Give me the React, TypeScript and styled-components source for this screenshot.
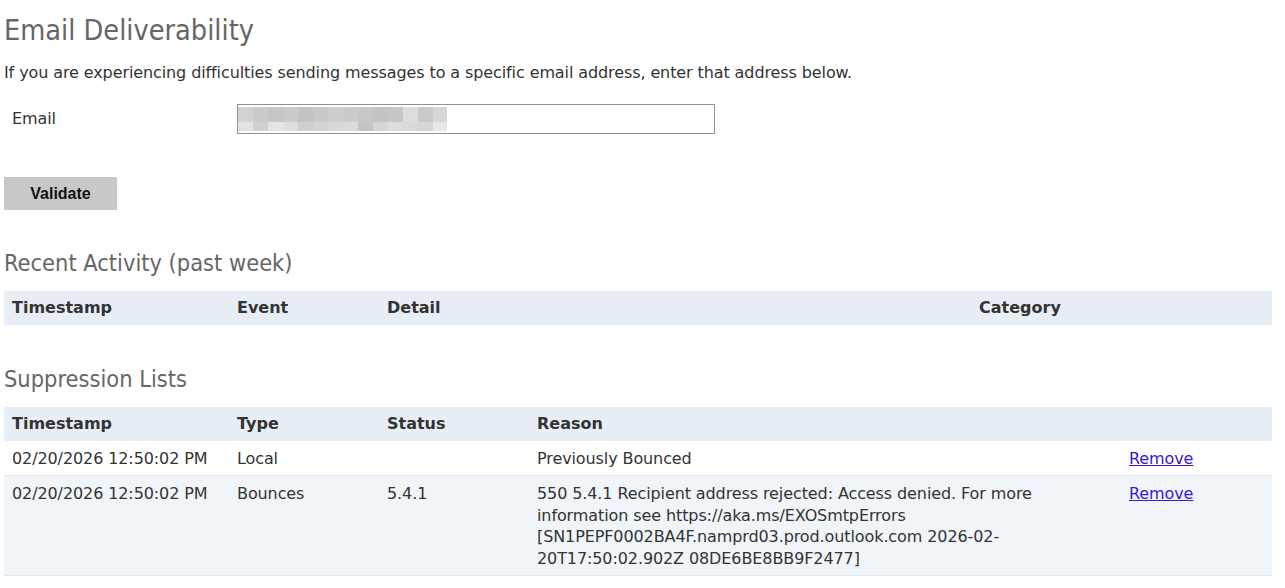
import React from 'react'
import styled, { createGlobalStyle } from 'styled-components'

const GlobalStyle = createGlobalStyle`
  html, body {
    margin: 0;
    padding: 0;
    background: #ffffff;
  }
  body {
    font-family: "DejaVu Sans", sans-serif;
    font-size: 16px;
    letter-spacing: -0.1px;
    color: #333333;
  }
`

const Page = styled.div`
  width: 1268px;
  padding: 0 13px 0 4px;
`

const Title = styled.h1`
  margin: 13px 0 0;
  font-family: "DejaVu Sans Condensed", "DejaVu Sans", sans-serif;
  font-size: 28.6px;
  line-height: 34px;
  font-weight: normal;
  letter-spacing: 0;
  color: #666666;
`

const Intro = styled.p`
  margin: 15px 0 0;
  line-height: 21px;
  color: #333333;
`

const FormRow = styled.div`
  display: grid;
  grid-template-columns: 233px 478px;
  align-items: center;
  margin-top: 21px;
  height: 30px;
`

const Label = styled.label`
  padding-left: 8px;
  margin-top: -2px;
  color: #333333;
`

const InputBox = styled.div`
  height: 30px;
  box-sizing: border-box;
  border: 1px solid #929292;
  display: flex;
  align-items: center;
  background: #ffffff;
`

const ValidateButton = styled.button`
  display: block;
  margin-top: 43px;
  width: 113px;
  height: 33px;
  border: none;
  background: #c8c8c8;
  font-family: "Liberation Sans", Arial, sans-serif;
  font-weight: bold;
  font-size: 16px;
  color: #111111;
  cursor: pointer;
`

const SectionTitle = styled.h2<{ $gap: number }>`
  margin: ${(p) => p.$gap}px 0 0;
  font-family: "DejaVu Sans Condensed", "DejaVu Sans", sans-serif;
  font-size: 23.4px;
  line-height: 29px;
  font-weight: normal;
  letter-spacing: 0;
  color: #666666;
`

const Table = styled.table<{ $gap: number }>`
  margin-top: ${(p) => p.$gap}px;
  width: 1268px;
  border-collapse: collapse;
  table-layout: fixed;
`

const HeadCell = styled.th<{ $w?: number }>`
  width: ${(p) => (p.$w ? `${p.$w}px` : 'auto')};
  text-align: left;
  font-family: "DejaVu Sans", sans-serif;
  font-weight: bold;
  font-size: 16px;
  line-height: 22px;
  letter-spacing: 0;
  padding: 6px 8px;
  background: #e7eef5;
  color: #333333;
`

const Row = styled.tr<{ $alt?: boolean }>`
  background: ${(p) => (p.$alt ? '#f0f5fa' : '#ffffff')};
  border-bottom: 1px solid #e0e7ef;
`

const Cell = styled.td`
  vertical-align: top;
  padding: 7px 8px 5.5px;
  line-height: 21.5px;
  color: #333333;
`

const RemoveLink = styled.a`
  color: #3a17d1;
  text-decoration: underline;
  cursor: pointer;
`

const mosaic = [
  ['#d2d2d2', '#cbcbcb', '#c6c6c6', '#cacaca', '#c3c3c3', '#c9c9c9', '#cdcdcd', '#cbcbcb', '#c8c8c8', '#c4c4c4', '#c6c6c6', '#dddddd', '#cacaca', '#d6d6d6'],
  ['#e3e3e3', '#d0d0d0', '#e4e4e4', '#dedede', '#cfcfcf', '#d3d3d3', '#d8d8d8', '#dadada', '#c4c4c4', '#d6d6d6', '#dddddd', '#d9d9d9', '#d7d7d7', '#e7e7e7'],
]

const BlurredValue = () => (
  <svg width="209" height="24" viewBox="0 0 209 24">
    {mosaic.map((row, r) =>
      row.map((c, i) => (
        <rect key={`${r}-${i}`} x={i * 15} y={r === 0 ? 0 : 15} width={15} height={r === 0 ? 15 : 9} fill={c} />
      )),
    )}
  </svg>
)

export default function App() {
  return (
    <>
      <GlobalStyle />
      <Page>
        <Title>Email Deliverability</Title>
        <Intro>
          If you are experiencing difficulties sending messages to a specific email address, enter that address below.
        </Intro>

        <FormRow>
          <Label>Email</Label>
          <InputBox>
            <BlurredValue />
          </InputBox>
        </FormRow>

        <ValidateButton>Validate</ValidateButton>

        <SectionTitle $gap={39}>Recent Activity (past week)</SectionTitle>
        <Table $gap={13}>
          <thead>
            <tr>
              <HeadCell $w={209}>Timestamp</HeadCell>
              <HeadCell $w={134}>Event</HeadCell>
              <HeadCell $w={576}>Detail</HeadCell>
              <HeadCell>Category</HeadCell>
            </tr>
          </thead>
        </Table>

        <SectionTitle $gap={40}>Suppression Lists</SectionTitle>
        <Table $gap={13}>
          <thead>
            <tr>
              <HeadCell $w={209}>Timestamp</HeadCell>
              <HeadCell $w={134}>Type</HeadCell>
              <HeadCell $w={134}>Status</HeadCell>
              <HeadCell $w={576}>Reason</HeadCell>
              <HeadCell></HeadCell>
            </tr>
          </thead>
          <tbody>
            <Row>
              <Cell>02/20/2026 12:50:02 PM</Cell>
              <Cell>Local</Cell>
              <Cell></Cell>
              <Cell>Previously Bounced</Cell>
              <Cell>
                <RemoveLink>Remove</RemoveLink>
              </Cell>
            </Row>
            <Row $alt>
              <Cell>02/20/2026 12:50:02 PM</Cell>
              <Cell>Bounces</Cell>
              <Cell>5.4.1</Cell>
              <Cell>
                550 5.4.1 Recipient address rejected: Access denied. For more
                <br />
                information see https://aka.ms/EXOSmtpErrors
                <br />
                [SN1PEPF0002BA4F.namprd03.prod.outlook.com 2026-02-
                <br />
                20T17:50:02.902Z 08DE6BE8BB9F2477]
              </Cell>
              <Cell>
                <RemoveLink>Remove</RemoveLink>
              </Cell>
            </Row>
          </tbody>
        </Table>
      </Page>
    </>
  )
}
